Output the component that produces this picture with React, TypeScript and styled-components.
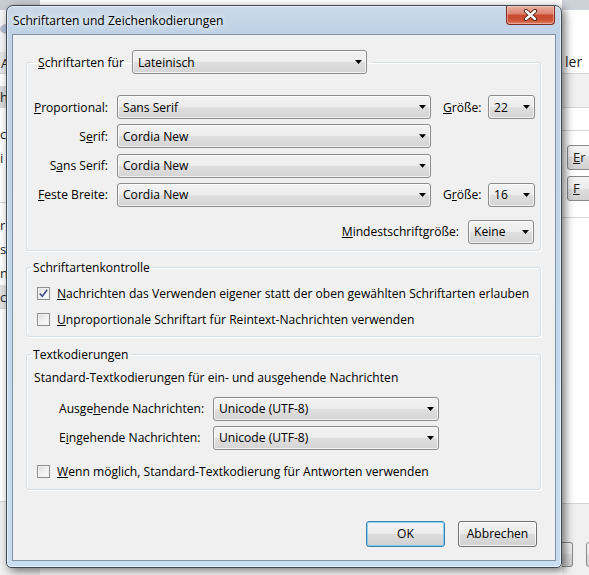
import React from 'react';
import styled, { createGlobalStyle } from 'styled-components';

const GlobalStyle = createGlobalStyle`
  html, body {
    margin: 0;
    padding: 0;
  }
  body {
    width: 589px;
    height: 575px;
    overflow: hidden;
    font-family: "Segoe UI", "Open Sans", "Noto Sans", sans-serif;
    font-size: 12.1px;
    color: #000;
    background: #fff;
  }
`;

const Desktop = styled.div`
  position: relative;
  width: 589px;
  height: 575px;
  overflow: hidden;
`;

/* ---------- the application window behind the dialog ---------- */

const BackWindow = styled.div`
  display: grid;
  grid-template-columns: 40px 1fr 27px;
  height: 100%;
  background: #fff;
  color: #1e1e1e;
  font-size: 13px;
`;

const SideColumn = styled.div`
  display: flex;
  flex-direction: column;
  overflow: hidden;
  min-width: 0;
`;

const Strip = styled.div<{ $h?: number; $bg?: string; $line?: boolean; $pad?: string }>`
  flex: ${p => (p.$h ? 'none' : '1')};
  height: ${p => (p.$h ? `${p.$h}px` : 'auto')};
  background: ${p => p.$bg ?? '#fff'};
  border-bottom: ${p => (p.$line ? '1px solid #d5d5d5' : 'none')};
  padding: ${p => p.$pad ?? '0'};
  box-sizing: border-box;
  display: flex;
  flex-direction: column;
  gap: 8px;
  overflow: hidden;
  white-space: nowrap;
`;

const BackText = styled.span<{ $size?: number }>`
  font-size: ${p => p.$size ?? 13}px;
  line-height: 16px;
`;

const BackButtons = styled.div<{ $column?: boolean }>`
  display: flex;
  flex-direction: ${p => (p.$column ? 'column' : 'row')};
  gap: ${p => (p.$column ? 6 : 13)}px;
`;

const BackButton = styled.div<{ $w: number; $cut?: boolean }>`
  width: ${p => p.$w}px;
  height: 25px;
  flex: none;
  box-sizing: border-box;
  border: 1px solid #8a8a8a;
  border-left: ${p => (p.$cut ? 'none' : '1px solid #8a8a8a')};
  border-radius: ${p => (p.$cut ? '0 3px 3px 0' : '3px')};
  background: linear-gradient(#f4f4f4 0%, #ececec 50%, #dedede 50%, #d2d2d2 100%);
  padding-left: 5px;
  line-height: 23px;
`;

const BlurIcon = styled.div`
  width: 14px;
  height: 10px;
  margin-top: 14px;
  border-radius: 50%;
  background: radial-gradient(circle at 30% 50%, #6fa0d8, #c58a80 70%, transparent 80%);
  opacity: 0.6;
`;

/* ---------- the dialog ---------- */

const Dialog = styled.div`
  position: absolute;
  left: 6px;
  top: 5px;
  width: 556px;
  height: 563px;
  box-sizing: border-box;
  display: flex;
  flex-direction: column;
  padding: 0 5px 6px 5px;
  border: 1px solid #3e4956;
  border-radius: 7px 7px 5px 5px;
  background: linear-gradient(180deg, #cbd9e8 0px, #bfd2e6 28px, #c2d8ee 60%, #c8ddf2 100%);
  box-shadow: inset 0 0 0 1px rgba(255, 255, 255, 0.55), 3px 3px 10px rgba(0, 0, 0, 0.55);
`;

const TitleBar = styled.div`
  height: 28px;
  flex: none;
  display: flex;
  align-items: flex-start;
  justify-content: space-between;
`;

const Title = styled.span`
  margin-top: 7px;
  padding-left: 1px;
  font-size: 12.1px;
  line-height: 16px;
  text-shadow: 0 0 6px #fff, 0 0 10px rgba(255, 255, 255, 0.9);
`;

const CloseButton = styled.div`
  width: 49px;
  height: 19px;
  margin-right: 1px;
  box-sizing: border-box;
  border: 1px solid #7a2f22;
  border-top: none;
  border-radius: 0 0 4px 4px;
  background: linear-gradient(180deg, #eab0a2 0%, #de8571 42%, #c94a2f 52%, #cf5236 80%, #e08567 100%);
  box-shadow: inset 0 0 0 1px rgba(255, 220, 210, 0.45);
  display: flex;
  align-items: center;
  justify-content: center;
`;

const Client = styled.div`
  flex: 1;
  display: flex;
  flex-direction: column;
  border: 1px solid #8093aa;
  background: #f0f0f0;
  padding: 15px 14px 0 13px;
`;

const Group = styled.fieldset<{ $gap?: number }>`
  margin: ${p => p.$gap ?? 0}px 0 0 0;
  padding: 0;
  min-width: 0;
  border: 1px solid #d5dfe5;
  border-radius: 3px;
  box-shadow: inset 1px 1px 0 #fff, 1px 1px 0 #fff;
`;

const Legend = styled.legend`
  margin-left: 4px;
  padding: 0 2px;
  line-height: 16px;
`;

const ComboLegend = styled.legend`
  margin-left: 6px;
  padding: 0 5px 0 5px;
  display: flex;
  align-items: center;
`;

const LegendLabel = styled.span`
  width: 94px;
  flex: none;
`;

const FontGrid = styled.div`
  display: grid;
  grid-template-columns: 83px 314px 43px 47px;
  grid-auto-rows: 24px;
  column-gap: 7px;
  row-gap: 5.33px;
  align-items: center;
  padding-top: 21px;
`;

const RowLabel = styled.span<{ $align?: 'left' | 'right' }>`
  text-align: ${p => p.$align ?? 'right'};
  padding-right: ${p => (p.$align === 'left' ? 0 : 2)}px;
  padding-left: ${p => (p.$align === 'left' ? 5 : 0)}px;
  white-space: nowrap;
`;

const MinRow = styled.div`
  display: flex;
  justify-content: flex-end;
  align-items: center;
  gap: 9px;
  margin-top: 13px;
  padding: 0 6px 6px 0;
`;

const Combo = styled.div<{ $width: number }>`
  width: ${p => p.$width}px;
  height: 24px;
  box-sizing: border-box;
  display: flex;
  align-items: center;
  justify-content: space-between;
  padding: 0 4px 0 5px;
  border: 1px solid #8b8b8b;
  border-radius: 3px;
  background: linear-gradient(180deg, #f3f3f3 0%, #ececec 50%, #dfdfdf 50%, #d4d4d4 100%);
  box-shadow: inset 0 0 0 1px rgba(255, 255, 255, 0.7);
  white-space: nowrap;
`;

const Arrow = styled.span`
  width: 7px;
  height: 4px;
  flex: none;
  background: #000;
  clip-path: polygon(0 0, 100% 0, 50% 100%);
`;

const CheckList = styled.div`
  display: flex;
  flex-direction: column;
  gap: 8px;
  padding: 9px 0 7px 10px;
`;

const CheckRow = styled.label`
  display: flex;
  align-items: center;
  gap: 7px;
  height: 18px;
  white-space: nowrap;
`;

const Box = styled.span`
  width: 13px;
  height: 13px;
  flex: none;
  box-sizing: border-box;
  border: 1px solid #8e8f8f;
  background: linear-gradient(135deg, #dcdcdc 0%, #f4f4f4 60%, #fbfbfb 100%);
  box-shadow: inset 0 0 0 1px #f2f2f2;
  display: flex;
  align-items: center;
  justify-content: center;
`;

const EncodingBody = styled.div`
  display: flex;
  flex-direction: column;
  padding: 7px 0 8px 0;
`;

const EncodingIntro = styled.div`
  padding-left: 7px;
  line-height: 16px;
`;

const EncodingGrid = styled.div`
  display: grid;
  grid-template-columns: 148px 226px;
  grid-auto-rows: 24px;
  column-gap: 6px;
  row-gap: 5px;
  align-items: center;
  margin-top: 11px;
  padding-left: 32px;
`;

const EncodingCheck = styled(CheckRow)`
  margin: 13px 0 0 10px;
`;

const ButtonBar = styled.div`
  display: flex;
  justify-content: flex-end;
  gap: 13px;
  margin-top: 31px;
  padding-right: 4px;
`;

const Button = styled.div<{ $default?: boolean }>`
  width: 79px;
  height: 26px;
  box-sizing: border-box;
  display: flex;
  align-items: center;
  justify-content: center;
  border: 1px solid ${p => (p.$default ? '#3c7fb1' : '#707070')};
  border-radius: 3px;
  background: linear-gradient(180deg, #f3f3f3 0%, #ebebeb 50%, #dddddd 50%, #d0d0d0 100%);
  box-shadow: inset 0 0 0 1px ${p => (p.$default ? 'rgba(72, 200, 243, 0.6)' : 'rgba(255, 255, 255, 0.75)')};
`;

const CheckMark = () => (
  <svg width="11" height="11" viewBox="0 0 11 11">
    <path d="M1.8 5.6 L4.3 8.3 L9.2 1.8" fill="none" stroke="#41568a" strokeWidth="1.7" />
  </svg>
);

const CloseGlyph = () => (
  <svg width="15" height="12" viewBox="0 0 15 12">
    <path d="M3 2 L12 10 M12 2 L3 10" stroke="#4a1e16" strokeWidth="4.2" strokeLinecap="round" />
    <path d="M3 2 L12 10 M12 2 L3 10" stroke="#fff" strokeWidth="2.4" strokeLinecap="round" />
  </svg>
);

const Select: React.FC<{ width: number; value: string }> = ({ width, value }) => (
  <Combo $width={width}>
    <span>{value}</span>
    <Arrow />
  </Combo>
);

const Check: React.FC<{ checked?: boolean; children: React.ReactNode }> = ({ checked, children }) => (
  <CheckRow>
    <Box>{checked && <CheckMark />}</Box>
    <span>{children}</span>
  </CheckRow>
);

const App: React.FC = () => {
  return (
    <Desktop>
      <GlobalStyle />
      <BackWindow>
        <SideColumn>
          <Strip $h={10} $bg="#c8cdd3" />
          <Strip $h={42} $bg="#f4f5f7">
            <BlurIcon />
          </Strip>
          <Strip $h={22} $bg="#e6e6e6" $line $pad="3px 0 0 1px">
            <BackText>A</BackText>
          </Strip>
          <Strip $h={12} />
          <Strip $h={22} $bg="#d9d9d9" $pad="3px 0 0 0">
            <BackText>h</BackText>
          </Strip>
          <Strip $h={95} $line $pad="18px 0 0 0">
            <BackText>c</BackText>
            <BackText>i</BackText>
          </Strip>
          <Strip $h={82} $pad="14px 0 0 0">
            <BackText>r</BackText>
            <BackText>s</BackText>
            <BackText>n</BackText>
          </Strip>
          <Strip $h={24} $bg="#e2e2e2" $line $pad="4px 0 0 0">
            <BackText>c</BackText>
          </Strip>
          <Strip $h={193} $line />
          <Strip $bg="#f0f0f0" />
        </SideColumn>
        <div />
        <SideColumn>
          <Strip $h={10} $bg="#cdd2d8" />
          <Strip $h={64} $line $pad="44px 0 0 3px">
            <BackText $size={14}>ler</BackText>
          </Strip>
          <Strip $h={34} $bg="#f0f0f0" $line />
          <Strip $h={23} $line />
          <Strip $h={87} $line $pad="14px 0 0 5px">
            <BackButtons $column>
              <BackButton $w={40}>
                <u>E</u>r
              </BackButton>
              <BackButton $w={40}>
                <u>F</u>
              </BackButton>
            </BackButtons>
          </Strip>
          <Strip $h={286} $line />
          <Strip $bg="#f0f0f0" $pad="38px 0 0 0">
            <BackButtons>
              <BackButton $w={11} $cut />
              <BackButton $w={30} />
            </BackButtons>
          </Strip>
        </SideColumn>
      </BackWindow>

      <Dialog>
        <TitleBar>
          <Title>Schriftarten und Zeichenkodierungen</Title>
          <CloseButton>
            <CloseGlyph />
          </CloseButton>
        </TitleBar>
        <Client>
          <Group>
            <ComboLegend>
              <LegendLabel>
                <u>S</u>chriftarten für
              </LegendLabel>
              <Select width={235} value="Lateinisch" />
            </ComboLegend>
            <FontGrid>
              <RowLabel>
                <u>P</u>roportional:
              </RowLabel>
              <Select width={314} value="Sans Serif" />
              <RowLabel $align="left">
                <u>G</u>röße:
              </RowLabel>
              <Select width={47} value="22" />

              <RowLabel>
                S<u>e</u>rif:
              </RowLabel>
              <Select width={314} value="Cordia New" />
              <span />
              <span />

              <RowLabel>
                S<u>a</u>ns Serif:
              </RowLabel>
              <Select width={314} value="Cordia New" />
              <span />
              <span />

              <RowLabel>
                <u>F</u>este Breite:
              </RowLabel>
              <Select width={314} value="Cordia New" />
              <RowLabel $align="left">
                G<u>r</u>öße:
              </RowLabel>
              <Select width={47} value="16" />
            </FontGrid>
            <MinRow>
              <span>
                <u>M</u>indestschriftgröße:
              </span>
              <Select width={66} value="Keine" />
            </MinRow>
          </Group>

          <Group $gap={9}>
            <Legend>Schriftartenkontrolle</Legend>
            <CheckList>
              <Check checked>
                <u>N</u>achrichten das Verwenden eigener statt der oben gewählten Schriftarten erlauben
              </Check>
              <Check>
                <u>U</u>nproportionale Schriftart für Reintext-Nachrichten verwenden
              </Check>
            </CheckList>
          </Group>

          <Group $gap={10}>
            <Legend>Textkodierungen</Legend>
            <EncodingBody>
              <EncodingIntro>Standard-Textkodierungen für ein- und ausgehende Nachrichten</EncodingIntro>
              <EncodingGrid>
                <span>
                  Ausge<u>h</u>ende Nachrichten:
                </span>
                <Select width={226} value="Unicode (UTF-8)" />
                <span>
                  E<u>i</u>ngehende Nachrichten:
                </span>
                <Select width={226} value="Unicode (UTF-8)" />
              </EncodingGrid>
              <EncodingCheck>
                <Box />
                <span>
                  <u>W</u>enn möglich, Standard-Textkodierung für Antworten verwenden
                </span>
              </EncodingCheck>
            </EncodingBody>
          </Group>

          <ButtonBar>
            <Button $default>OK</Button>
            <Button>Abbrechen</Button>
          </ButtonBar>
        </Client>
      </Dialog>
    </Desktop>
  );
};

export default App;
